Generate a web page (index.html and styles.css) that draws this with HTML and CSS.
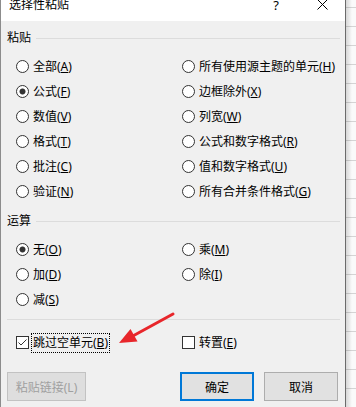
FILE: index.html
```html
<!DOCTYPE html>
<html lang="zh-CN">
<head>
  <meta charset="UTF-8">
  <title>选择性粘贴</title>
  <link rel="stylesheet" href="styles.css">
</head>
<body>
<div class="screen">

  <!-- janela do diálogo -->
  <div class="dialog">
    <div class="titlebar">
      <span class="title">选择性粘贴</span>
      <span class="title-btn help">?</span>
      <span class="title-btn close">
        <svg width="11" height="11" viewBox="0 0 11 11"><path d="M0.5 0.5L10.5 10.5M10.5 0.5L0.5 10.5" stroke="#000" stroke-width="1" fill="none"/></svg>
      </span>
    </div>

    <div class="content">
      <div class="group-head"><span>粘贴</span><i class="rule"></i></div>
      <div class="options paste">
        <label class="opt"><span class="radio"></span><span>全部(<u>A</u>)</span></label>
        <label class="opt"><span class="radio"></span><span>所有使用源主题的单元(<u>H</u>)</span></label>
        <label class="opt"><span class="radio on"></span><span>公式(<u>F</u>)</span></label>
        <label class="opt"><span class="radio"></span><span>边框除外(<u>X</u>)</span></label>
        <label class="opt"><span class="radio"></span><span>数值(<u>V</u>)</span></label>
        <label class="opt"><span class="radio"></span><span>列宽(<u>W</u>)</span></label>
        <label class="opt"><span class="radio"></span><span>格式(<u>T</u>)</span></label>
        <label class="opt"><span class="radio"></span><span>公式和数字格式(<u>R</u>)</span></label>
        <label class="opt"><span class="radio"></span><span>批注(<u>C</u>)</span></label>
        <label class="opt"><span class="radio"></span><span>值和数字格式(<u>U</u>)</span></label>
        <label class="opt"><span class="radio"></span><span>验证(<u>N</u>)</span></label>
        <label class="opt"><span class="radio"></span><span>所有合并条件格式(<u>G</u>)</span></label>
      </div>

      <div class="group-head"><span>运算</span><i class="rule"></i></div>
      <div class="options">
        <label class="opt"><span class="radio on"></span><span>无(<u>O</u>)</span></label>
        <label class="opt"><span class="radio"></span><span>乘(<u>M</u>)</span></label>
        <label class="opt"><span class="radio"></span><span>加(<u>D</u>)</span></label>
        <label class="opt"><span class="radio"></span><span>除(<u>I</u>)</span></label>
        <label class="opt"><span class="radio"></span><span>减(<u>S</u>)</span></label>
      </div>

      <div class="sep"></div>

      <div class="options checks">
        <label class="opt">
          <span class="check"><svg width="11" height="11" viewBox="0 0 11 11"><path d="M1.5 5.5L4 8L9.5 2.5" stroke="#333" stroke-width="1" fill="none"/></svg></span>
          <span class="focus">跳过空单元(<u>B</u>)</span>
        </label>
        <label class="opt"><span class="check"></span><span>转置(<u>E</u>)</span></label>
      </div>

      <div class="buttons">
        <button class="btn link" disabled>粘贴链接(L)</button>
        <button class="btn ok">确定</button>
        <button class="btn">取消</button>
      </div>
    </div>
  </div>

  <!-- planilha atrás do diálogo -->
  <div class="sheet"></div>

  <!-- seta vermelha de destaque -->
  <svg class="arrow" width="356" height="407" viewBox="0 0 356 407">
    <line x1="173" y1="314" x2="131" y2="337" stroke="#e8262b" stroke-width="3" stroke-linecap="round"/>
    <polygon points="119,343 130.5,329 137.5,341.5" fill="#e8262b"/>
  </svg>
</div>
</body>
</html>
```

FILE: styles.css
```css
* {
  box-sizing: border-box;
}

body {
  margin: 0;
  width: 356px;
  height: 407px;
  overflow: hidden;
  font-family: "Noto Sans", "Noto Sans CJK SC", sans-serif;
  font-size: 12px;
  color: #000;
  background: #fff;
}

.screen {
  position: relative;
  display: flex;
  height: 407px;
}

/* Diálogo */
.dialog {
  width: 346px;
  flex: none;
  display: flex;
  flex-direction: column;
  background: #f0f0f0;
  border-left: 1px solid #8c8c8c;
  border-right: 1px solid #6b6b6b;
}

.titlebar {
  height: 21px;
  flex: none;
  display: flex;
  align-items: flex-start;
  background: #fff;
}

.title {
  flex: 1;
  padding-left: 8px;
  line-height: 12px;
  margin-top: -1px;
}

.title-btn {
  width: 46px;
  height: 21px;
  display: flex;
  justify-content: center;
  align-items: flex-start;
}

.help {
  font-size: 13px;
  line-height: 12px;
  margin-top: -1px;
}

.close svg {
  margin-top: -1px;
}

.content {
  padding: 0 5px 0 6px;
}

.group-head {
  display: flex;
  align-items: center;
  gap: 5px;
  height: 16px;
  line-height: 16px;
  margin-top: 9px;
}

.group-head .rule {
  flex: 1;
  height: 1px;
  background: #dcdcdc;
}

.options {
  display: grid;
  grid-template-columns: 166px 1fr;
  grid-auto-rows: 25px;
  padding-left: 9px;
  margin-top: 8px;
}

.opt {
  display: flex;
  align-items: center;
  gap: 4px;
  line-height: 16px;
  white-space: nowrap;
}

.opt u {
  text-underline-offset: 1px;
}

.radio {
  width: 13px;
  height: 13px;
  flex: none;
  border: 1px solid #333;
  border-radius: 50%;
  background: #fff;
}

.radio.on {
  background: radial-gradient(circle closest-side, #333 0, #333 2.6px, #fff 3.4px);
}

.check {
  width: 13px;
  height: 13px;
  flex: none;
  border: 1px solid #333;
  background: #fff;
}

.check svg {
  display: block;
}

.sep {
  height: 1px;
  background: #dcdcdc;
  margin-top: 7px;
}

.checks {
  margin-top: 10px;
}

.focus {
  margin-left: -2px;
  padding: 1px 1px;
  border: 1px dotted #000;
}

/* Botões */
.buttons {
  display: flex;
  margin-top: 17px;
  padding-right: 2px;
}

.btn {
  width: 74px;
  height: 29px;
  display: flex;
  align-items: center;
  justify-content: center;
  padding: 0;
  font: inherit;
  color: #000;
  background: #e1e1e1;
  border: 1px solid #adadad;
}

.btn.link {
  width: 79px;
  margin-right: auto;
  color: #a0a0a0;
  background: #dedede;
  border-color: #c2c2c2;
}

.btn.ok {
  margin-right: 10px;
  border: 2px solid #0078d7;
}

/* Planilha ao fundo */
.sheet {
  flex: 1;
  background:
    linear-gradient(to right, rgba(0, 0, 0, 0.14), rgba(0, 0, 0, 0) 6px),
    repeating-linear-gradient(to bottom, #fafafa 0, #fafafa 18.06px, #d4d4d4 18.06px, #d4d4d4 19.06px);
  background-position: 0 0, 0 -11px;
}

.arrow {
  position: absolute;
  left: 0;
  top: 0;
  pointer-events: none;
}
```
